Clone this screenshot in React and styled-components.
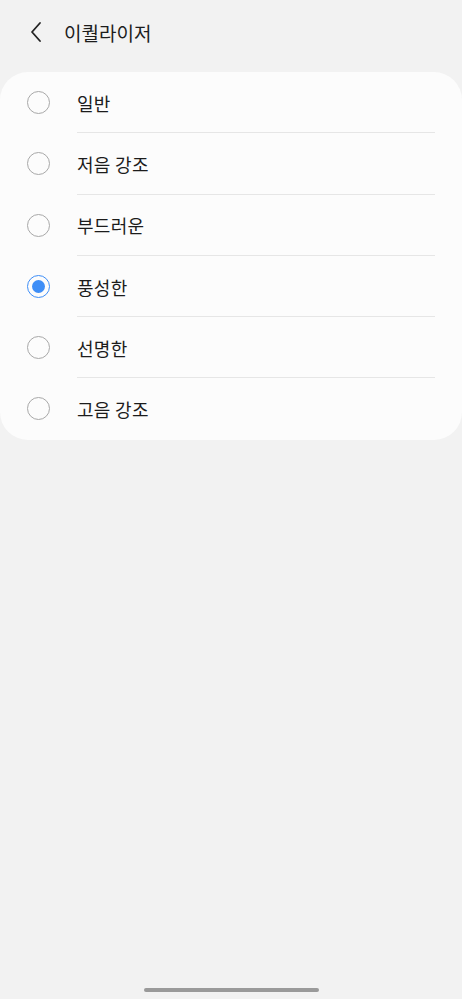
import React, { useState } from 'react'
import styled, { createGlobalStyle } from 'styled-components'

const GlobalStyle = createGlobalStyle`
  html, body {
    margin: 0;
    padding: 0;
    background: #f2f2f2;
  }
  body {
    font-family: "Noto Sans CJK KR", "Noto Sans", sans-serif;
  }
`

const Screen = styled.div`
  width: 462px;
  height: 999px;
  display: flex;
  flex-direction: column;
  background: #f2f2f2;
  box-sizing: border-box;
`

const Header = styled.header`
  height: 64px;
  display: flex;
  align-items: center;
  padding-left: 26px;
  gap: 18px;
`

const BackButton = styled.button`
  width: 20px;
  height: 28px;
  padding: 0;
  border: none;
  background: none;
  display: flex;
  align-items: center;
  justify-content: center;
`

const Title = styled.h1`
  margin: 0;
  font-size: 19px;
  font-weight: 400;
  color: #1c1c1c;
  letter-spacing: 0;
`

const Card = styled.ul`
  list-style: none;
  margin: 8px 0 0;
  padding: 0;
  background: #fcfcfc;
  border-radius: 28px;
`

const Row = styled.li`
  height: 61.25px;
  display: flex;
  align-items: center;
  padding-left: 27px;
  cursor: pointer;
`

const Label = styled.div`
  flex: 1;
  height: 100%;
  display: flex;
  align-items: center;
  margin-left: 27px;
  margin-right: 27px;
  font-size: 18px;
  color: #1c1c1c;
  letter-spacing: 0.3px;
  border-bottom: ${p => (p.$last ? 'none' : '1.5px solid #e6e6e6')};
  box-sizing: border-box;
  padding-top: ${p => (p.$last ? '0' : '1.5px')};
`

const Radio = styled.span`
  width: 23px;
  height: 23px;
  border-radius: 50%;
  box-sizing: border-box;
  border: 1.5px solid ${p => (p.$on ? '#3e8ef7' : '#a8a8a8')};
  display: flex;
  align-items: center;
  justify-content: center;
  flex-shrink: 0;

  &::after {
    content: '';
    width: 13px;
    height: 13px;
    border-radius: 50%;
    background: #3e8ef7;
    display: ${p => (p.$on ? 'block' : 'none')};
  }
`

const Spacer = styled.div`
  flex: 1;
`

const HomeBar = styled.div`
  align-self: center;
  width: 175px;
  height: 4px;
  border-radius: 2px;
  background: #9a9a9a;
  margin-bottom: 7px;
`

const presets = ['일반', '저음 강조', '부드러운', '풍성한', '선명한', '고음 강조']

export default function App() {
  const [selected, setSelected] = useState(3)

  return (
    <Screen>
      <GlobalStyle />
      <Header>
        <BackButton aria-label="뒤로">
          <svg width="14" height="22" viewBox="0 0 14 22">
            <path d="M11 2 L3 11 L11 20" fill="none" stroke="#222" strokeWidth="1.8" strokeLinecap="round" strokeLinejoin="round" />
          </svg>
        </BackButton>
        <Title>이퀄라이저</Title>
      </Header>
      <Card>
        {presets.map((name, i) => (
          <Row key={name} onClick={() => setSelected(i)}>
            <Radio $on={i === selected} />
            <Label $last={i === presets.length - 1}>{name}</Label>
          </Row>
        ))}
      </Card>
      <Spacer />
      <HomeBar />
    </Screen>
  )
}
